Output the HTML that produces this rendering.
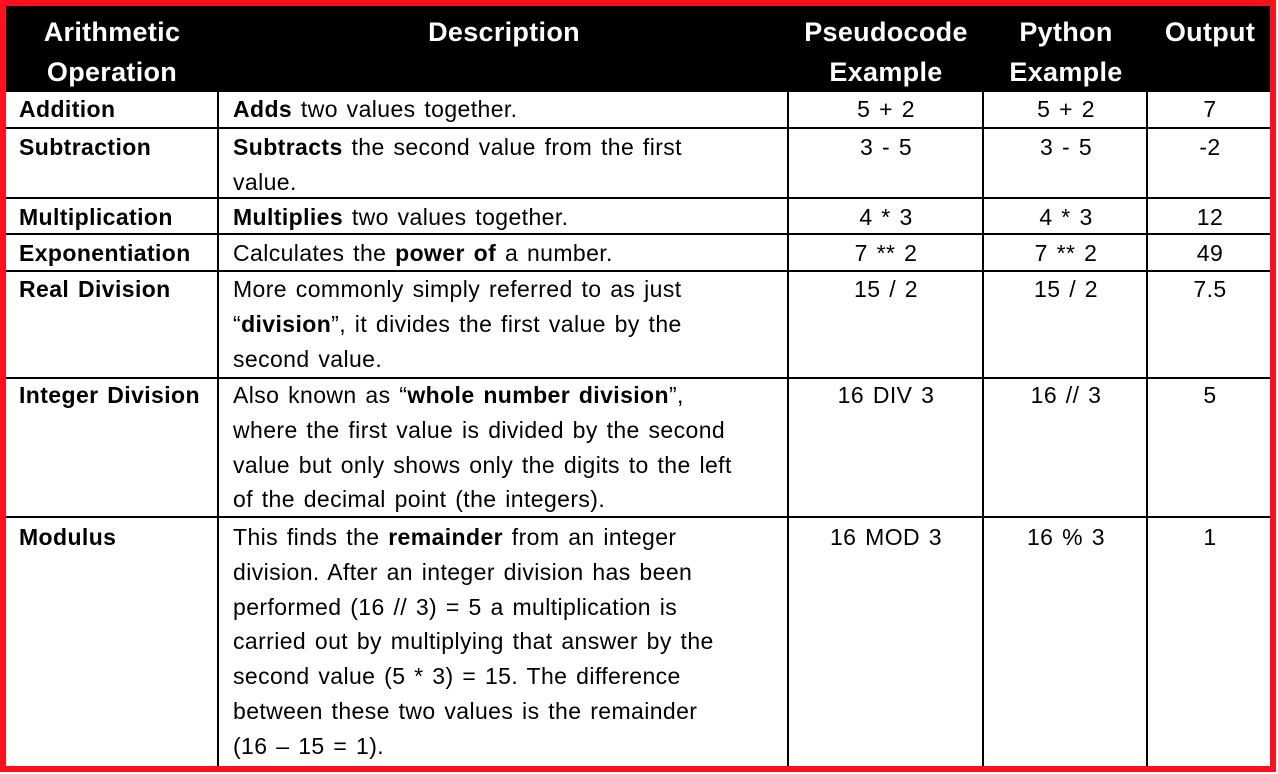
<!DOCTYPE html>
<html><head><meta charset="utf-8"><style>
body{margin:0;width:1278px;height:774px;background:#fff;position:relative;overflow:hidden;font-family:"Liberation Sans",sans-serif;font-size:23px;letter-spacing:0.4px;word-spacing:2px;color:#000}
.frame{position:absolute;left:0;top:0;width:1264px;height:760px;border:6px solid #ff101f}
.hdr{position:absolute;left:6px;top:6px;width:1264px;height:86px;background:#000}
.h{position:absolute;color:#fff;font-weight:bold;font-size:27px;line-height:40px;text-align:center;top:12px;letter-spacing:0.3px}
.v{position:absolute;width:2px;background:#000;top:92px;height:674px}
.hl{position:absolute;height:2px;background:#000;left:6px;width:1264px}
.t{position:absolute;line-height:34.8px;white-space:nowrap}
.c{text-align:center}
b{font-weight:bold}
</style></head><body>
<div class="hdr"></div>
<div class="h" style="left:6px;width:212px">Arithmetic<br>Operation</div>
<div class="h" style="left:219px;width:570px">Description</div>
<div class="h" style="left:789px;width:194px">Pseudocode<br>Example</div>
<div class="h" style="left:984px;width:164px">Python<br>Example</div>
<div class="h" style="left:1148px;width:124px">Output</div>

<div class="v" style="left:217px"></div>
<div class="v" style="left:787px"></div>
<div class="v" style="left:982px"></div>
<div class="v" style="left:1146px"></div>
<div class="hl" style="top:127px"></div>
<div class="hl" style="top:197px"></div>
<div class="hl" style="top:233px"></div>
<div class="hl" style="top:270px"></div>
<div class="hl" style="top:377px"></div>
<div class="hl" style="top:516px"></div>

<div class="t" style="left:19px;top:92px"><b>Addition</b></div>
<div class="t" style="left:233px;top:92px"><b>Adds</b> two values together.</div>
<div class="t c" style="left:789px;width:194px;top:92px">5 + 2</div>
<div class="t c" style="left:984px;width:164px;top:92px">5 + 2</div>
<div class="t c" style="left:1148px;width:124px;top:92px">7</div>

<div class="t" style="left:19px;top:130px"><b>Subtraction</b></div>
<div class="t" style="left:233px;top:130px"><b>Subtracts</b> the second value from the first<br>value.</div>
<div class="t c" style="left:789px;width:194px;top:130px">3 - 5</div>
<div class="t c" style="left:984px;width:164px;top:130px">3 - 5</div>
<div class="t c" style="left:1148px;width:124px;top:130px">-2</div>

<div class="t" style="left:19px;top:200px"><b>Multiplication</b></div>
<div class="t" style="left:233px;top:200px"><b>Multiplies</b> two values together.</div>
<div class="t c" style="left:789px;width:194px;top:200px">4 * 3</div>
<div class="t c" style="left:984px;width:164px;top:200px">4 * 3</div>
<div class="t c" style="left:1148px;width:124px;top:200px">12</div>

<div class="t" style="left:19px;top:236px"><b>Exponentiation</b></div>
<div class="t" style="left:233px;top:236px">Calculates the <b>power of</b> a number.</div>
<div class="t c" style="left:789px;width:194px;top:236px">7 ** 2</div>
<div class="t c" style="left:984px;width:164px;top:236px">7 ** 2</div>
<div class="t c" style="left:1148px;width:124px;top:236px">49</div>

<div class="t" style="left:19px;top:272px"><b>Real Division</b></div>
<div class="t" style="left:233px;top:272px">More commonly simply referred to as just<br>“<b>division</b>”, it divides the first value by the<br>second value.</div>
<div class="t c" style="left:789px;width:194px;top:272px">15 / 2</div>
<div class="t c" style="left:984px;width:164px;top:272px">15 / 2</div>
<div class="t c" style="left:1148px;width:124px;top:272px">7.5</div>

<div class="t" style="left:19px;top:378px"><b>Integer Division</b></div>
<div class="t" style="left:233px;top:378px">Also known as “<b>whole number division</b>”,<br>where the first value is divided by the second<br>value but only shows only the digits to the left<br>of the decimal point (the integers).</div>
<div class="t c" style="left:789px;width:194px;top:378px">16 DIV 3</div>
<div class="t c" style="left:984px;width:164px;top:378px">16 // 3</div>
<div class="t c" style="left:1148px;width:124px;top:378px">5</div>

<div class="t" style="left:19px;top:520px"><b>Modulus</b></div>
<div class="t" style="left:233px;top:520px">This finds the <b>remainder</b> from an integer<br>division. After an integer division has been<br>performed (16 // 3) = 5 a multiplication is<br>carried out by multiplying that answer by the<br>second value (5 * 3) = 15. The difference<br>between these two values is the remainder<br>(16 – 15 = 1).</div>
<div class="t c" style="left:789px;width:194px;top:520px">16 MOD 3</div>
<div class="t c" style="left:984px;width:164px;top:520px">16 % 3</div>
<div class="t c" style="left:1148px;width:124px;top:520px">1</div>

<div class="frame"></div>
</body></html>
